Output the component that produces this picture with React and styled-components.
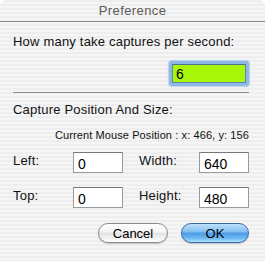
import React from 'react';
import styled, { createGlobalStyle } from 'styled-components';

const GlobalStyle = createGlobalStyle`
  html, body {
    margin: 0;
    padding: 0;
    background: #fff;
  }
  body {
    font-family: "Liberation Sans", Arial, sans-serif;
  }
`;

const Window = styled.div`
  width: 265px;
  height: 261px;
  box-sizing: border-box;
  border-radius: 6px 6px 0 0;
  overflow: hidden;
  background: repeating-linear-gradient(
    to bottom,
    #eeeeee 0px,
    #eeeeee 2px,
    #f5f5f5 2px,
    #f5f5f5 4px
  );
  display: flex;
  flex-direction: column;
`;

const TitleBar = styled.div`
  height: 21px;
  border-bottom: 1px solid #8c8c8c;
  display: flex;
  align-items: center;
  justify-content: center;
  font-size: 13px;
  color: #5a5a5a;
  letter-spacing: 0.4px;
`;

const Content = styled.div`
  padding: 0 16px 0 13px;
  display: flex;
  flex-direction: column;
`;

const Label = styled.div`
  font-size: ${p => p.$size || 13}px;
  color: #111;
  line-height: 16px;
  margin-top: ${p => p.$top || 0}px;
  text-align: ${p => p.$align || 'left'};
  letter-spacing: ${p => p.$spacing || 0}px;
`;

const RateRow = styled.div`
  display: flex;
  justify-content: flex-end;
  margin-top: 11px;
`;

const FocusRing = styled.div`
  padding: 3px;
  border-radius: 3px;
  background: #8fb8e4;
  box-shadow: 0 0 1px 1px #b9d4f0;
  display: flex;
`;

const RateInput = styled.input`
  width: 74px;
  height: 19px;
  box-sizing: border-box;
  border: 1px solid #5f84ad;
  border-top-color: #4d6f96;
  background: #a8f60a;
  outline: none;
  font-family: "Liberation Sans", Arial, sans-serif;
  font-size: 14px;
  color: #000;
  padding: 0 3px;
  border-radius: 0;
`;

const Separator = styled.div`
  height: 1px;
  background: #8e8e8e;
  margin-top: 6px;
`;

const FieldGrid = styled.div`
  display: grid;
  grid-template-columns: 60px 50px 16px 60px 50px;
  row-gap: 14px;
  align-items: center;
  margin-top: 9px;
`;

const FieldLabel = styled.div`
  font-size: 13px;
  color: #111;
  grid-column: ${p => p.$col};
  margin-top: -4px;
  letter-spacing: 0.2px;
`;

const Field = styled.input`
  grid-column: ${p => p.$col};
  width: 50px;
  height: 21px;
  box-sizing: border-box;
  border: 1px solid #9a9a9a;
  border-top-color: #777;
  background: #fff;
  outline: none;
  font-family: "Liberation Sans", Arial, sans-serif;
  font-size: 14px;
  color: #000;
  padding: 2px 4px 0;
  border-radius: 0;
`;

const ButtonRow = styled.div`
  display: flex;
  justify-content: flex-end;
  gap: 13px;
  margin-top: 15px;
`;

const Button = styled.button`
  width: ${p => p.$w}px;
  height: 20px;
  border-radius: 10px;
  font-family: "Liberation Sans", Arial, sans-serif;
  font-size: 13px;
  color: #000;
  padding: 0;
  border: 1px solid ${p => (p.$primary ? '#3a6aa3' : '#8a8a8a')};
  background: ${p =>
    p.$primary
      ? 'linear-gradient(to bottom, #bfe1fb 0%, #7fbdf0 45%, #4c9ae4 50%, #6fb9f3 80%, #b4e4ff 100%)'
      : 'linear-gradient(to bottom, #ffffff 0%, #f4f4f4 45%, #e2e2e2 50%, #f4f4f4 80%, #ffffff 100%)'};
  box-shadow: 0 1px 1px rgba(0, 0, 0, 0.2);
`;

export default function App() {
  return (
    <>
      <GlobalStyle />
      <Window>
        <TitleBar>Preference</TitleBar>
        <Content>
          <Label $top={12} $spacing={0.2}>How many take captures per second:</Label>
          <RateRow>
            <FocusRing>
              <RateInput defaultValue="6" />
            </FocusRing>
          </RateRow>
          <Separator />
          <Label $top={9} $spacing={0.2}>Capture Position And Size:</Label>
          <Label $size={11} $top={9} $align="right" $spacing={0.1}>
            Current Mouse Position : x: 466, y: 156
          </Label>
          <FieldGrid>
            <FieldLabel $col={1}>Left:</FieldLabel>
            <Field $col={2} defaultValue="0" />
            <FieldLabel $col={4}>Width:</FieldLabel>
            <Field $col={5} defaultValue="640" />
            <FieldLabel $col={1}>Top:</FieldLabel>
            <Field $col={2} defaultValue="0" />
            <FieldLabel $col={4}>Height:</FieldLabel>
            <Field $col={5} defaultValue="480" />
          </FieldGrid>
          <ButtonRow>
            <Button $w={70}>Cancel</Button>
            <Button $w={68} $primary>OK</Button>
          </ButtonRow>
        </Content>
      </Window>
    </>
  );
}
